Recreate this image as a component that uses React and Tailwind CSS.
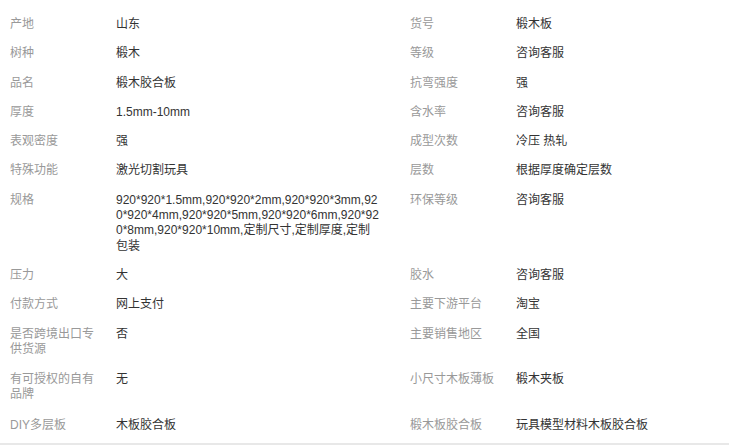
import React from "react";

const rows = [
  [["产地", "山东"], ["货号", "椴木板"]],
  [["树种", "椴木"], ["等级", "咨询客服"]],
  [["品名", "椴木胶合板"], ["抗弯强度", "强"]],
  [["厚度", "1.5mm-10mm"], ["含水率", "咨询客服"]],
  [["表观密度", "强"], ["成型次数", "冷压 热轧"]],
  [["特殊功能", "激光切割玩具"], ["层数", "根据厚度确定层数"]],
  [
    [
      "规格",
      "920*920*1.5mm,920*920*2mm,920*920*3mm,920*920*4mm,920*920*5mm,920*920*6mm,920*920*8mm,920*920*10mm,定制尺寸,定制厚度,定制包装",
    ],
    ["环保等级", "咨询客服"],
  ],
  [["压力", "大"], ["胶水", "咨询客服"]],
  [["付款方式", "网上支付"], ["主要下游平台", "淘宝"]],
  [["是否跨境出口专供货源", "否"], ["主要销售地区", "全国"]],
  [["有可授权的自有品牌", "无"], ["小尺寸木板薄板", "椴木夹板"]],
  [["DIY多层板", "木板胶合板"], ["椴木板胶合板", "玩具模型材料木板胶合板"]],
];

function Cell({ label, value, half, tall }) {
  return (
    <div
      className={`flex pt-[7px] ${tall ? "pb-[8px]" : "pb-[7px]"} ${
        half ? "w-[400px] shrink-0" : "flex-1"
      }`}
    >
      <div className="w-[116px] shrink-0 pl-[10px] pr-[14px] text-[#999999] break-all">
        {label}
      </div>
      <div className={`${half ? "w-[264px]" : "flex-1"} shrink-0 text-[#333333] break-all`}>
        {value}
      </div>
    </div>
  );
}

export default function App() {
  return (
    <div
      className="w-[729px] h-[448px] overflow-hidden bg-white text-[12px] leading-[15.3px]"
      style={{ fontFamily: '"Liberation Sans", "Noto Sans CJK SC", sans-serif' }}
    >
      <div className="pt-[10px] pb-[3px] border-b-2 border-[#e8e8e8]">
        {rows.map((r, i) => {
          const tall = i === 9 || i === 10;
          return (
            <div key={i} className="flex">
              <Cell label={r[0][0]} value={r[0][1]} half tall={tall} />
              <Cell label={r[1][0]} value={r[1][1]} tall={tall} />
            </div>
          );
        })}
      </div>
    </div>
  );
}
